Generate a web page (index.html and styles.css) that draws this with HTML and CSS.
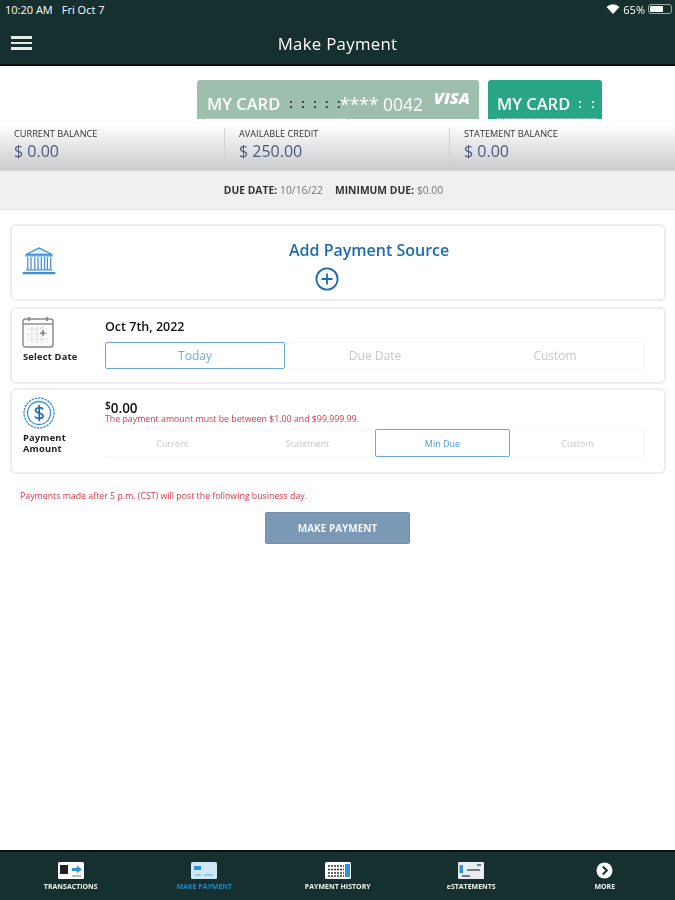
FILE: index.html
```html
<!DOCTYPE html>
<html lang="en">
<head>
<meta charset="utf-8">
<title>Make Payment</title>
<link rel="stylesheet" href="styles.css">
</head>
<body>
<div class="app">
  <header class="top">
    <div class="status">
      <span class="status-left"><span>10:20 AM</span><span>Fri Oct 7</span></span>
      <span class="status-right">
        <svg width="14" height="10" viewBox="0 0 14 10"><path d="M0.5 3 A9 9 0 0 1 13.500 3 L7 10 Z" fill="#fff"/></svg>
        <span>65%</span>
        <span class="battery"><span class="battery-fill"></span></span>
      </span>
    </div>
    <div class="titlebar">
      <span class="burger"><i></i><i></i><i></i></span>
      <span class="title">Make Payment</span>
    </div>
  </header>

  <div class="cards">
    <div class="ccard ccard-a">
      <span class="ccard-name">MY CARD</span>
      <span class="dots">: : : : :</span>
      <span class="ccard-num">**** 0042</span>
      <span class="visa">VISA</span>
    </div>
    <div class="ccard ccard-b">
      <span class="ccard-name">MY CARD</span>
      <span class="dots">: :</span>
    </div>
  </div>

  <section class="balances">
    <div class="bal"><div class="bal-label">CURRENT BALANCE</div><div class="bal-value">$ 0.00</div></div>
    <div class="bal"><div class="bal-label">AVAILABLE CREDIT</div><div class="bal-value">$ 250.00</div></div>
    <div class="bal"><div class="bal-label">STATEMENT BALANCE</div><div class="bal-value">$ 0.00</div></div>
  </section>

  <div class="due"><b>DUE DATE:</b> <span>10/16/22</span> <b class="due-min">MINIMUM DUE:</b> <span>$0.00</span></div>

  <main class="content">
    <section class="panel panel-source">
      <svg class="bank" width="34" height="30" viewBox="0 0 36 32" fill="none" stroke="#3f8fd0" stroke-width="1.300">
        <path d="M18 2 L32 9 H4 Z" fill="#dcecf8"/>
        <path d="M3 10.500 H33"/>
        <path d="M6 12 V25 M9.500 12 V25 M13.500 12 V25 M17 12 V25 M20.500 12 V25 M24 12 V25 M27 12 V25 M30.500 12 V25"/>
        <path d="M4 25.500 H32"/>
        <path d="M1.500 29 H34.500" stroke-width="2.400" stroke-linecap="round"/>
      </svg>
      <div class="source-body">
        <div class="source-title">Add Payment Source</div>
        <svg class="source-plus" width="24" height="24" viewBox="0 0 24 24" fill="none" stroke="#1c6cb0" stroke-width="1.800"><circle cx="12" cy="12" r="10.600"/><path d="M12 6.500 V17.500 M6.500 12 H17.500"/></svg>
      </div>
    </section>

    <section class="panel panel-date">
      <div class="side">
        <svg class="side-icon" width="32" height="32" viewBox="0 0 32 32" fill="#fbfbfb" stroke="#888" stroke-width="1.400">
          <rect x="1" y="3" width="30" height="28" rx="2.500"/>
          <path d="M1 8 H31"/>
          <path d="M7 1 V5 M25 1 V5" stroke-width="1.800"/>
          <path d="M6 13 H26 M6 18 H26 M6 23 H26 M10 11 V27 M15 11 V27 M20 11 V27" stroke="#ccc" stroke-width="1.100" stroke-dasharray="1.500 1.500"/>
          <path d="M21 14 V20 M18 17 H24" stroke="#666" stroke-width="1.200"/>
        </svg>
        <div class="side-label">Select Date</div>
      </div>
      <div class="main">
        <div class="value-date">Oct 7th, 2022</div>
        <div class="seg seg-three">
          <span class="opt opt-on">Today</span>
          <span class="opt">Due Date</span>
          <span class="opt">Custom</span>
        </div>
      </div>
    </section>

    <section class="panel panel-amount">
      <div class="side">
        <svg class="side-icon" width="32" height="32" viewBox="0 0 32 32" fill="none" stroke="#3f8fd0">
          <circle cx="16" cy="16" r="15" stroke-width="1.300" stroke-dasharray="2.500 0.800"/>
          <circle cx="16" cy="16" r="11.500" stroke-width="1.300"/>
          <path d="M20 12.500 C19 10 12.500 10 12.500 13.300 C12.500 16.800 20 15.300 20 19 C20 22.300 13 22 12 19.500 M16.200 8 V24" stroke="#1c6cb0" stroke-width="1.700"/>
        </svg>
        <div class="side-label">Payment<br>Amount</div>
      </div>
      <div class="main">
        <div class="value-amount"><sup>$</sup>0.00</div>
        <div class="error">The payment amount must be between $1.00 and $99,999.99.</div>
        <div class="seg seg-four">
          <span class="opt">Current</span>
          <span class="opt">Statement</span>
          <span class="opt opt-on">Min Due</span>
          <span class="opt">Custom</span>
        </div>
      </div>
    </section>

    <p class="notice">Payments made after 5 p.m. (CST) will post the following business day.</p>
    <button class="pay" type="button">MAKE PAYMENT</button>
  </main>

  <nav class="tabs">
    <div class="tab">
      <svg width="26" height="17" viewBox="0 0 26 17"><rect width="26" height="17" rx="1.500" fill="#fff"/><rect x="2" y="3" width="8" height="9" fill="#222"/><path d="M14 6 H19 V3.500 L24 7.500 L19 11 V9 H14 Z" fill="#2f93d8"/><path d="M14 14 H23" stroke="#777"/></svg>
      <span>TRANSACTIONS</span>
    </div>
    <div class="tab tab-on">
      <svg width="26" height="17" viewBox="0 0 26 17"><rect width="26" height="17" rx="1.500" fill="#cfe8f8"/><rect x="3" y="4" width="7" height="4" fill="#2f93d8"/><path d="M4 13 H10 M13 13 H22" stroke="#5aa9dc"/></svg>
      <span>MAKE PAYMENT</span>
    </div>
    <div class="tab">
      <svg width="26" height="17" viewBox="0 0 26 17"><rect width="26" height="17" rx="1.500" fill="#fff"/><path d="M3 4 H19 M3 7.500 H19 M3 11 H19 M3 14 H19" stroke="#333" stroke-width="1.600" stroke-dasharray="2 1"/><rect x="20" y="2" width="5" height="13" fill="#2f93d8"/></svg>
      <span>PAYMENT HISTORY</span>
    </div>
    <div class="tab">
      <svg width="26" height="17" viewBox="0 0 26 17"><rect width="26" height="17" rx="1" fill="#e8eef0"/><rect x="1.500" y="3" width="3.500" height="8" fill="#2f93d8"/><path d="M9 8 H22 M4 14 H12 M19 3 H23" stroke="#555" stroke-width="1.300"/></svg>
      <span>eSTATEMENTS</span>
    </div>
    <div class="tab">
      <svg width="17" height="17" viewBox="0 0 17 17"><circle cx="8.500" cy="8.500" r="8" fill="#fff"/><path d="M6.800 4.500 L10.800 8.500 L6.800 12.500" fill="none" stroke="#16302f" stroke-width="2"/></svg>
      <span>MORE</span>
    </div>
  </nav>
</div>
</body>
</html>
```
FILE: styles.css
```css
* { box-sizing: border-box; }
html, body { margin: 0; height: 100%; }
body { font-family: "Open Sans", "Liberation Sans", sans-serif; background: #fff; color: #222; }
.app { width: 675px; height: 900px; display: flex; flex-direction: column; overflow: hidden; filter: blur(0.35px); }

.top { height: 66px; background: #16302f; color: #fff; border-bottom: 2px solid #0a0f0f; flex: none; }
.status { height: 18px; padding: 0 3px 0 5px; display: flex; justify-content: space-between; align-items: center; font-size: 11px; }
.status-left { display: flex; gap: 9px; }
.status-right { display: flex; align-items: center; gap: 3px; }
.battery { width: 24px; height: 10px; border: 1px solid #9aa; border-radius: 3px; padding: 1px; display: block; }
.battery-fill { display: block; width: 65%; height: 100%; background: #fff; border-radius: 1px; }
.titlebar { height: 46px; position: relative; display: flex; align-items: center; justify-content: center; padding-top: 4px; }
.title { font-size: 16.800px; font-weight: 500; letter-spacing: 0.300px; }
.burger { position: absolute; left: 11px; top: 18px; width: 21px; display: flex; flex-direction: column; gap: 3px; }
.burger i { display: block; height: 2.500px; background: #e6ebea; }

.cards { height: 53px; flex: none; padding: 14px 0 0 197px; display: flex; gap: 9px; }
.ccard { height: 39px; border-radius: 3px 3px 0 0; color: #fff; position: relative; overflow: hidden; display: flex; align-items: flex-start; padding: 14px 0 0 10px; }
.ccard::after { content: ""; position: absolute; left: 10px; width: 138px; bottom: 0; border-bottom: 1px dotted rgba(255, 255, 255, 0.6); }
.ccard-a { width: 282px; background: #9fbfae; }
.ccard-b { width: 114px; background: #28a585; padding-left: 9px; }
.ccard-b::after { left: 9px; width: 100px; }
.ccard-name { font-size: 16.500px; font-weight: 600; line-height: 20px; white-space: nowrap; }
.dots { font-size: 13px; font-weight: 600; color: #111; word-spacing: 5px; line-height: 18px; margin-left: 9px; white-space: pre; }
.ccard-b .dots { color: #fff; margin-left: 8px; word-spacing: 6px; }
.ccard-num { position: absolute; left: 143px; top: 14px; font-size: 17.500px; line-height: 20px; white-space: nowrap; }
.visa { position: absolute; right: 9px; top: 7px; font-size: 16.500px; line-height: 22px; font-weight: 800; font-style: italic; }

.balances { height: 52px; flex: none; display: flex; background: linear-gradient(#fff 0%, #fdfdfd 12%, #c9cbcd 100%); border-bottom: 1px solid #d4d6d8; padding-top: 9px; }
.bal { width: 225px; padding-left: 14px; height: 36px; border-right: 1px solid #d0d2d4; }
.bal:last-child { border-right: 0; }
.bal-label { font-size: 9.200px; line-height: 12px; color: #333; }
.bal-value { font-size: 16px; line-height: 21px; color: #4c5a80; margin-top: 1px; }

.due { height: 39px; flex: none; background: #eef0f1; border-bottom: 1px solid #e4e6e7; display: flex; justify-content: center; align-items: center; gap: 3px; font-size: 10.300px; color: #777; padding: 0 8px 1px 0; }
.due b { color: #333; font-weight: 700; }
.due-min { margin-left: 9px; }

.content { flex: 1; display: flex; flex-direction: column; align-items: stretch; padding: 14px 9px 0 10px; }
.panel { background: #fff; border: 2px solid #eceeef; border-radius: 6px; display: flex; }
.panel-source { height: 77px; padding: 20px 0 0 10px; align-items: flex-start; }
.bank { flex: none; }
.source-body { display: flex; flex-direction: column; align-items: flex-start; margin-left: 233px; margin-top: -7px; }
.source-title { font-size: 16px; font-weight: 600; color: #1c6cb0; line-height: 22px; margin-bottom: 6px; white-space: nowrap; }
.source-plus { margin-left: 26px; }
.panel-date { height: 77px; margin-top: 6px; padding: 7px 0 0 10px; }
.panel-amount { height: 86px; margin-top: 4px; padding: 7px 0 0 11px; }
.side { width: 83px; flex: none; }
.panel-amount .side { width: 82px; }
.side-icon { display: block; }
.side-label { font-size: 9.300px; line-height: 11px; font-weight: 700; color: #222; margin-top: 3px; letter-spacing: 0.200px; }
.panel-date .side-label { margin-top: 3px; padding-left: 1px; }
.main { width: 540px; }
.value-date { font-size: 12.500px; line-height: 16px; font-weight: 600; color: #111; margin-top: 3px; margin-bottom: 7px; }
.value-amount { font-size: 13.500px; line-height: 14px; font-weight: 600; color: #111; margin-top: 4px; }
.value-amount sup { font-size: 10px; line-height: 0; vertical-align: 4px; }
.error { font-size: 8.800px; line-height: 9px; color: #d23a4a; white-space: nowrap; margin-bottom: 5px; }
.seg { display: grid; border-right: 1px solid #f1f2f3; border-top: 1px solid #f6f7f7; border-bottom: 1px solid #f6f7f7; }
.seg-three { grid-template-columns: 180px 180px 180px; height: 27px; }
.seg-four { grid-template-columns: 135px 135px 135px 135px; height: 28px; }
.opt { display: flex; align-items: center; justify-content: center; color: #c6c8ca; }
.seg-three .opt { font-size: 12px; }
.seg-four .opt { font-size: 9px; }
.opt-on { border: 1.500px solid #6aa9dc; border-radius: 2px; color: #68aee2; margin: -1px 0; }
.seg-four .opt-on { color: #4d9ad6; }

.notice { margin: 17px 0 0 10px; font-size: 8.800px; line-height: 11px; color: #d23a4a; }
.pay { align-self: center; margin: 10px 0 0 -1px; width: 145px; height: 32px; background: #7b98b4; border: 1px solid #6f8fae; border-radius: 2px; color: #f2f5f8; font: 700 10px "Open Sans", sans-serif; }

.tabs { height: 50px; flex: none; background: #16302f; border-top: 2px solid #0a0f0f; display: grid; grid-template-columns: repeat(5, 133.500px); padding: 10px 0 0 4px; }
.tab { display: flex; flex-direction: column; align-items: center; gap: 3px; color: #eef1f1; font-size: 7px; font-weight: 700; line-height: 9px; white-space: nowrap; }
.tab-on { color: #1f87c6; }
```
